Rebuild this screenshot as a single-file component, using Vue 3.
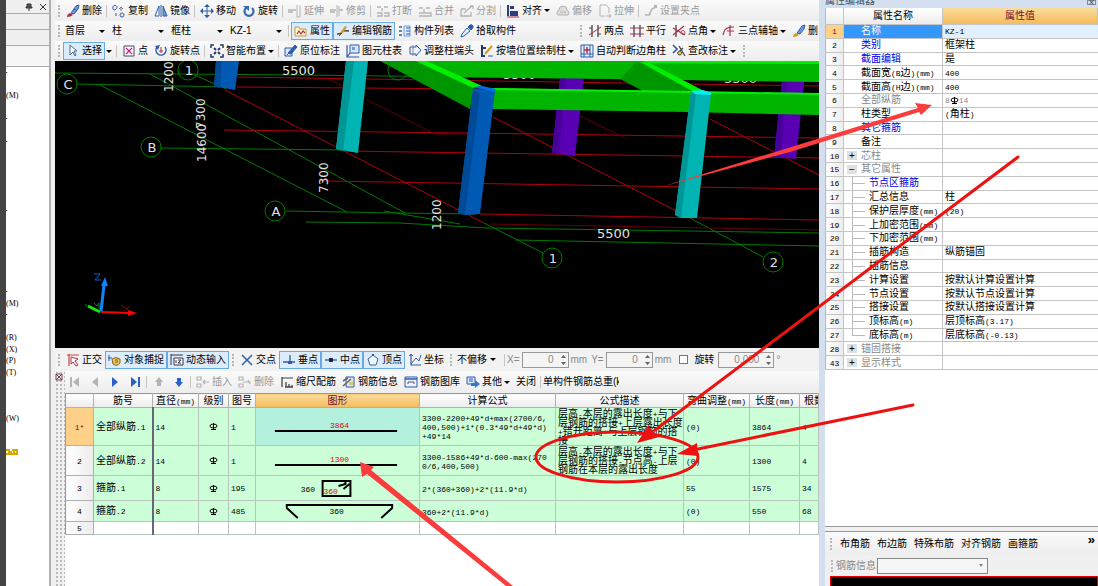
<script setup>
import { h } from 'vue'

const B = '#2f5da8'
const L = '#6f9bd8'
const G = '#b4b4b4'
const D = '#444'
const R = '#a8324a'
const Y = '#e8c25a'
const O = '#d39a2c'

// Each icon is a list of [fill, stroke, path, stroke width]
const icons = {
  brush: [[L, B, 'M5 9L10 2L13 1L12 5L8 10Z'], ['none', B, 'M8 5L11 7'], [R, 'none', 'M1 13Q1 10 4 9L7 11Q5 13 1 13Z']],
  brushSoft: [[L, B, 'M5 9L10 2L13 1L12 5L8 10Z'], [O, 'none', 'M1 13Q1 10 4 9L7 11Q5 13 1 13Z']],
  copy: [['none', B, 'M1 3A2 2 0 1 1 4 5L3 6A2 2 0 0 1 1 3'], ['none', '#777', 'M7 5L9 3L11 5M9 3V7'], ['none', B, 'M8 11A2 2 0 1 1 10 13A2 2 0 0 1 8 11M4 9V12']],
  mirror: [['#fff', B, 'M5 2V12H1Z'], [L, B, 'M9 2V12H13Z'], ['none', B, 'M7 1V13']],
  move: [['none', B, 'M7 2V12M2 7H12', 1], [B, 'none', 'M7 0L10 3H4ZM7 14L10 11H4ZM0 7L3 4V10ZM14 7L11 4V10Z']],
  rotate: [['none', '#3567b5', 'M4 4A4.500 4.500 0 1 0 10 4', 2.200], ['#3567b5', 'none', 'M1 2H7V7Z']],
  extend: [['none', G, 'M0 6H8M0 8H5', 1.500], ['none', G, 'M9 1V13H12V1']],
  trim: [['none', G, 'M0 6H6M9 6H13M0 8H5', 1.500], ['none', G, 'M7 1V13M9 2V12']],
  cut: [['none', G, 'M1 3H5M8 3H12M1 9H6V12H1M8 9H13V12H8M6 4V7', 1.300]],
  merge: [['none', G, 'M1 4H5M8 4H12M1 9H13V12H1M6 5V8', 1.300]],
  split: [['none', G, 'M1 5V12H11V8M4 9L12 2M6 5H1M10 2H13V5', 1.300]],
  align: [['#2b3d7c', 'none', 'M1 1H3V12H1ZM4 7H12V12H4ZM4 2H8V5H4Z'], ['none', R, 'M1 13H13', 1]],
  offset: [['#ddd', G, 'M2 11A3 3 0 0 1 3 6A4 4 0 0 1 11 6A3 3 0 0 1 12 11Z'], ['none', G, 'M4 8H10']],
  stretch: [['#f6f6f6', G, 'M2 1H8L11 4V9M2 1V12H7'], ['none', G, 'M8 12H13M11 10L13 12L11 14']],
  grip: [['none', G, 'M1 11H5L8 5L12 3M6 11V8', 1.500], [G, 'none', 'M10 1H13V4H10Z']],
  props: [['#fff2ca', O, 'M1 3H5L6 5H12V12H1Z'], ['none', R, 'M3 10L5 7L7 10L9 7L11 9', 1.200]],
  rebar: [['none', D, 'M1 10Q5 10 6 8T13 7', 1.500], [O, 'none', 'M4 9L9 2L11 3L7 9Z'], ['none', D, 'M3 12L6 9']],
  list: [['none', B, 'M1 3H4M1 7H4M1 11H4', 1.500], ['#e8f0ff', L, 'M6 2H12V12H6Z'], ['none', B, 'M8 4H12M8 7H12M8 10H12']],
  picker: [[B, B, 'M8 3L10 1Q12 0 13 2Q14 3 11 6Z'], ['#dfeeff', B, 'M7 4L10 7L4 12L1 13L2 10Z']],
  arrow: [['#fff', '#526a8b', 'M4 1V11L7 8L9 12L10 11L8 7H11Z']],
  point: [['#fff', '#446', 'M2 2H12V12H2Z'], ['none', '#c02080', 'M4 4L10 10M10 4L4 10', 1.200]],
  rotPoint: [['none', B, 'M3 3A5 5 0 1 0 11 3', 1.500], [B, 'none', 'M1 2L6 1L4 6Z'], ['none', R, 'M7 3V9M5 7H9']],
  smart: [['none', '#223a6c', 'M1 4V1H4M10 1H13V4M13 10V13H10M4 13H1V10', 1.500], ['none', '#223a6c', 'M4 4L6 6M10 4L8 6M4 10L6 8M10 10L8 8', 2]],
  note: [['#dbe8ff', B, 'M1 4H8V12H1Z'], [B, B, 'M4 9L11 1L13 3L7 10Z'], ['none', B, 'M3 11L5 9']],
  table: [['#dbe8ff', B, 'M4 1H13V9H4Z'], ['none', B, 'M1 1V13H13M1 13L4 9', 1.200], [L, 'none', 'M6 3H9V6H6Z']],
  adjust: [['#eef4ff', B, 'M2 3H8V1L13 6L8 12V10H2Z'], ['none', '#888', 'M5 1V12']],
  wall: [['none', '#223a6c', 'M2 1V12H5M2 4H6', 2], ['none', O, 'M5 10L12 2', 2], ['none', B, 'M8 12H13']],
  judge: [['#e8f0ff', B, 'M1 1H13V13H1Z'], ['none', B, 'M4 1V13M10 1V13M1 10H13'], ['none', R, 'M7 3V9M4 6H10', 1.500]],
  check: [['none', B, 'M1 1L5 5L1 9', 1.700], ['none', D, 'M7 2L13 12M7 8L11 4', 1.200], [Y, D, 'M6 8A2 2 0 1 1 8 11A2 2 0 0 1 6 8']],
  two: [['none', D, 'M4 1V13M10 1V13', 1.300], ['none', R, 'M1 11L13 3'], ['none', D, 'M1 4H4M10 10H13']],
  parallel: [['none', '#445', 'M4 1V13M10 1V13', 1.300], ['none', R, 'M0 4H14M0 10H14', 1.200]],
  angle: [['none', D, 'M4 1V13', 1.300], ['none', R, 'M1 11L12 2M1 4L13 11', 1.200], ['none', R, 'M9 8A2 2 0 1 1 9 9']],
  three: [['none', R, 'M2 8Q3 3 12 3M8 1V12M2 8L1 11M5 7H12', 1.200]],
  ortho: [['none', '#c44', 'M1 2H13M3 1V13', 1.200], ['#fff', R, 'M5 4L12 6L9 8L12 12L10 13L7 9L5 11Z']],
  snap: [[Y, '#8a6420', 'M4 6Q8 3 12 6V10Q9 14 5 11Z'], ['none', B, 'M1 2V8M0 5H4'], ['none', '#8a6420', 'M7 7H10M7 9H10']],
  dynamic: [['#fff', '#334', 'M4 5H13V12H4Z'], ['none', '#334', 'M1 1V12M1 2H13'], ['none', '#334', 'M6 7V10M8 7H11L8 10H11']],
  cross: [['none', '#2d5faa', 'M2 2L12 12M12 2L2 12', 1.500]],
  perp: [['none', B, 'M1 9H13M8 2V9', 1.300], [B, 'none', 'M6 8H10V11H6Z']],
  mid: [['none', B, 'M1 7H13', 1.300], ['#224', 'none', 'M5 5H9V9H5Z']],
  vertex: [['#eef6ff', '#35649a', 'M7 2L12 6L10 12H4L2 6Z'], [B, 'none', 'M6 1H8V3H6Z']],
  coord: [['none', B, 'M3 1V12H13', 1.200], ['none', B, 'M3 11L8 5L11 8L13 2M1 3L3 1L5 3']],
  first: [['none', G, 'M3 2V12', 2], [G, 'none', 'M11 2V12L5 7Z']],
  prev: [[G, 'none', 'M10 2V12L4 7Z']],
  next: [['#2861c8', 'none', 'M4 2V12L10 7Z']],
  last: [['#2861c8', 'none', 'M3 2V12L9 7Z'], ['none', '#2861c8', 'M11 2V12', 2]],
  up: [[G, 'none', 'M7 2L11 7H9V11H5V7H3Z']],
  down: [['#2861c8', 'none', 'M7 12L3 7H5V3H9V7H11Z']],
  insert: [['none', G, 'M1 2H5V5H1ZM1 9H5V12H1ZM7 7H13M7 7L9 5M7 7L9 9', 1.200]],
  remove: [['none', G, 'M1 2H5V5H1ZM1 9H5V12H1ZM5 7H13M10 5L12 9', 1.200]],
  scale: [['none', D, 'M2 2V12', 1.300], ['none', D, 'M2 3H13', 1], ['none', D, 'M6 7V12M9 9V12M5 12H13M12 10V12', 1.300]],
  info: [['#dbe8ff', B, 'M4 2H12V12H4Z'], ['none', '#665', 'M1 11L9 4M1 6L6 3', 1.500], [Y, 'none', 'M7 7H11V10H7Z']],
  library: [['#eef4ff', B, 'M1 2H13V12H1Z'], ['none', B, 'M1 4H13', 1.500], ['none', '#556', 'M4 9V7H10V9']],
  other: [['#dbe8ff', B, 'M1 2H9V9H1Z'], ['none', B, 'M3 4H7M3 6H7'], ['#3d74c8', 'none', 'M5 8H9V5L14 9L9 13V11H5Z']],
}

const Icon = (p) =>
  h(
    'svg',
    { class: 'icon', viewBox: '0 0 14 14', 'aria-hidden': 'true' },
    icons[p.name].map(([fill, stroke, d, w]) => h('path', { fill, stroke, d, 'stroke-width': w || 1 })),
  )
Icon.props = ['name']

// Half-width runs are set in a narrow monospace beside the full-width characters
const Mixed = (p) =>
  String(p.text)
    .split(/([\x20-\x7e]+)/)
    .filter(Boolean)
    .map((s) => h('span', { class: /^[\x20-\x7e]/.test(s) ? 'half' : 'full' }, s))
Mixed.props = ['text']

const Steel = () =>
  h('svg', { class: 'steel', viewBox: '0 0 9 9', role: 'img', 'aria-label': 'HRB335' }, [
    h('ellipse', { cx: 4.5, cy: 4, rx: 3.5, ry: 2, fill: 'none', stroke: 'currentColor' }),
    h('path', { d: 'M4.500 1V8M2 7.500H7', fill: 'none', stroke: 'currentColor' }),
  ])

const sep = { sep: true }
const modify = [
  { i: 'brush', t: '删除' }, sep,
  { i: 'copy', t: '复制' }, { i: 'mirror', t: '镜像' }, sep,
  { i: 'move', t: '移动' }, { i: 'rotate', t: '旋转' }, sep,
  { i: 'extend', t: '延伸', off: true }, { i: 'trim', t: '修剪', off: true }, sep,
  { i: 'cut', t: '打断', off: true }, { i: 'merge', t: '合并', off: true }, { i: 'split', t: '分割', off: true }, sep,
  { i: 'align', t: '对齐', more: true },
  { i: 'offset', t: '偏移', off: true }, { i: 'stretch', t: '拉伸', off: true }, sep,
  { i: 'grip', t: '设置夹点', off: true },
]
const picks = [
  { label: '楼层', v: '首层', c: 'floor' },
  { label: '构件类别', v: '柱' },
  { label: '构件类型', v: '框柱' },
  { label: '构件', v: 'KZ-1' },
]
const member = [
  { i: 'props', t: '属性', on: true }, { i: 'rebar', t: '编辑钢筋', on: true },
  { i: 'list', t: '构件列表' }, { i: 'picker', t: '拾取构件' },
]
const axes = [
  { i: 'two', t: '两点' }, { i: 'parallel', t: '平行' }, { i: 'angle', t: '点角', more: true },
  { i: 'three', t: '三点辅轴', more: true }, { i: 'brushSoft', t: '删' },
]
const drawing = [
  { i: 'arrow', t: '选择', on: true, more: true }, sep,
  { i: 'point', t: '点' }, { i: 'rotPoint', t: '旋转点' }, sep,
  { i: 'smart', t: '智能布置', more: true }, sep,
  { i: 'note', t: '原位标注' }, { i: 'table', t: '图元柱表' }, { i: 'adjust', t: '调整柱端头' },
  { i: 'wall', t: '按墙位置绘制柱', more: true }, { i: 'judge', t: '自动判断边角柱' },
  { i: 'check', t: '查改标注', more: true },
]
const snapA = [{ i: 'ortho', t: '正交' }, { i: 'snap', t: '对象捕捉', on: true }, { i: 'dynamic', t: '动态输入', on: true }]
const snapB = [
  { i: 'cross', t: '交点' }, { i: 'perp', t: '垂点', on: true }, { i: 'mid', t: '中点', on: true },
  { i: 'vertex', t: '顶点', on: true }, { i: 'coord', t: '坐标' },
]
const record = [
  { i: 'first', l: '第一行', off: true }, { i: 'prev', l: '上一行', off: true }, { i: 'next', l: '下一行' }, { i: 'last', l: '最后一行' }, sep,
  { i: 'up', l: '上移', off: true }, { i: 'down', l: '下移' }, sep,
  { i: 'insert', t: '插入', off: true }, { i: 'remove', t: '删除', off: true }, { i: 'scale', t: '缩尺配筋' },
  { i: 'info', t: '钢筋信息' }, { i: 'library', t: '钢筋图库' }, { i: 'other', t: '其他', more: true }, { t: '关闭' }, sep,
]

const bars = [
  { n: '1*', name: '全部纵筋.1', d: 14, no: 1, f: '3300-2200+49*d+max(2700/6,400,500)+1*(0.3*49*d+49*d)+49*14', t: '层高-本层的露出长度+与下层钢筋的搭接+上层露出长度+错开距离+与上层钢筋的搭接', b: '(0)', len: 3864, q: 4, c: 'r1' },
  { n: '2', name: '全部纵筋.2', d: 14, no: 1, f: '3300-1586+49*d-600-max(2700/6,400,500)', t: '层高-本层的露出长度+与下层钢筋的搭接-节点高-上层钢筋在本层的露出长度', b: '(0)', len: 1300, q: 4, c: 'r2' },
  { n: '3', name: '箍筋.1', d: 8, no: 195, f: '2*(360+360)+2*(11.9*d)', t: '', b: '55', len: 1575, q: 34, c: 'r3' },
  { n: '4', name: '箍筋.2', d: 8, no: 485, f: '360+2*(11.9*d)', t: '', b: '(0)', len: 550, q: 68, c: 'r4' },
]

const props = [
  { n: 1, k: '名称', v: 'KZ-1', c: 'sel' },
  { n: 2, k: '类别', v: '框架柱', c: 'blue' },
  { n: 3, k: '截面编辑', v: '是', c: 'blue' },
  { n: 4, k: '截面宽(B边)(mm)', v: '400' },
  { n: 5, k: '截面高(H边)(mm)', v: '400' },
  { n: 6, k: '全部纵筋', v: '8', steel: '14', c: 'gray' },
  { n: 7, k: '柱类型', v: '(角柱)' },
  { n: 8, k: '其它箍筋', v: '', c: 'blue' },
  { n: 9, k: '备注', v: '' },
  { n: 10, k: '芯柱', v: '', c: 'gray', box: '+' },
  { n: 15, k: '其它属性', v: '', c: 'gray', box: '−' },
  { n: 16, k: '节点区箍筋', v: '', c: 'blue kid' },
  { n: 17, k: '汇总信息', v: '柱', c: 'kid' },
  { n: 18, k: '保护层厚度(mm)', v: '(20)', c: 'kid' },
  { n: 19, k: '上加密范围(mm)', v: '', c: 'kid' },
  { n: 20, k: '下加密范围(mm)', v: '', c: 'kid' },
  { n: 21, k: '插筋构造', v: '纵筋锚固', c: 'kid' },
  { n: 22, k: '插筋信息', v: '', c: 'kid' },
  { n: 23, k: '计算设置', v: '按默认计算设置计算', c: 'kid' },
  { n: 24, k: '节点设置', v: '按默认节点设置计算', c: 'kid' },
  { n: 25, k: '搭接设置', v: '按默认搭接设置计算', c: 'kid' },
  { n: 26, k: '顶标高(m)', v: '层顶标高(3.17)', c: 'kid' },
  { n: 27, k: '底标高(m)', v: '层底标高(-0.13)', c: 'kid last' },
  { n: 28, k: '锚固搭接', v: '', c: 'gray', box: '+' },
  { n: 43, k: '显示样式', v: '', c: 'gray', box: '+' },
]

const keys = { 0: '▪', 2: '(M)', 4: '▪', 6: '▪', 12: '▪', 19: '▪', 20: '(M)', 21: '▪', 23: '(R)', 24: '(X)', 25: '(P)', 26: '(T)', 30: '(W)' }
const tree = Array.from({ length: 45 }, (_, i) => keys[i] || '')

const greens = [
  'M55 73L300 75L819 81', 'M76 84L230 87', 'M98 84L347 212', 'M150 74L405 213', 'M188 72L226 89',
  'M161 148L345 150', 'M286 211L400 213L476 214', 'M306 222L400 223L487 228L819 233', 'M515 240L819 246',
  'M484 223L543 253', 'M690 218L763 257', 'M384 211L460 224',
]
const reds = [
  'M237 87L480 89', 'M237 77L819 86', 'M224 130L540 134L819 138', 'M345 151L819 158', 'M324 181L819 189',
  'M480 214L819 220', 'M225 90L484 223', 'M493 117L690 218', 'M710 119L819 175',
]
const faint = ['M367 100L435 134H475', 'M580 116L625 138', 'M490 224L819 230', 'M330 80L345 87']
const bubbles = [
  { x: 67, y: 84, t: 'C' }, { x: 188, y: 70, t: '1' }, { x: 151, y: 147, t: 'B' }, { x: 275, y: 211, t: 'A' },
  { x: 552, y: 258, t: '1' }, { x: 773, y: 262, t: '2' },
]
const upright = [
  { x: 173, y: 92, t: '1200' }, { x: 205, y: 129, t: '7300' }, { x: 206, y: 162, t: '14600' },
  { x: 328, y: 193, t: '7300' }, { x: 441, y: 230, t: '1200' },
]

const Tools = (p) =>
  p.items.map((a) =>
    a.sep
      ? h('i', { class: 'sep' })
      : h('span', { class: 'slot' }, [
          h('button', { type: 'button', class: ['tool', { on: a.on }], disabled: a.off, 'aria-label': a.l }, [
            a.i && h(Icon, { name: a.i }),
            a.t && h('span', a.t),
            a.more && !a.on && h('i', { class: 'more' }),
          ]),
          a.more && a.on && h('i', { class: 'more' }),
        ]),
  )
Tools.props = ['items']

const Arrows = () =>
  h('svg', { class: 'arrows', viewBox: '0 0 7 12', 'aria-hidden': 'true' }, [
    h('path', { d: 'M3.500 1L6 4H1ZM1 8H6L3.500 11Z', fill: '#666' }),
  ])
</script>

<template>
  <div class="app">
    <div class="edge"></div>
    <aside class="nav">
      <div class="nav-head">
        <button type="button" aria-label="固定"><svg viewBox="0 0 8 8"><path d="M2 1H6V4H7V5H1V4H2ZM4 5V8" fill="#555" stroke="#333" /></svg></button>
        <button type="button" aria-label="关闭"><svg viewBox="0 0 8 8"><path d="M1 1L7 7M7 1L1 7" stroke="#333" /></svg></button>
      </div>
      <div class="nav-a"></div>
      <div class="nav-b"></div>
      <div class="nav-c"></div>
      <ul class="tree">
        <li v-for="(k, i) in tree" :key="i" :class="{ dot: k === '▪' }">
          <svg v-if="i === 33" viewBox="0 0 13 8"><path d="M0 2H3V6H0M5 3V6H8V3M8 6H11V2H6" fill="none" stroke="#d8a800" stroke-width="2" /></svg>
          <template v-else>{{ k }}</template>
        </li>
      </ul>
    </aside>

    <main class="main">
      <div class="bar first"><i class="grip"></i><Tools :items="modify" /></div>
      <div class="bar">
        <i class="grip"></i>
        <label v-for="p in picks" :key="p.v" class="pick" :class="p.c">
          <select :aria-label="p.label"><option>{{ p.v }}</option></select><i class="more"></i>
        </label>
        <i class="sep"></i>
        <Tools :items="member" />
        <div class="axes"><i class="grip"></i><Tools :items="axes" /></div>
      </div>
      <div class="bar"><i class="grip"></i><Tools :items="drawing" /><i class="grip tail"></i></div>

      <svg class="scene" viewBox="55 61 764 287" preserveAspectRatio="xMinYMin slice" role="img" aria-label="三维视图">
        <g class="line green"><path v-for="d in greens" :key="d" :d="d" /></g>
        <g class="line red"><path v-for="d in reds" :key="d" :d="d" /></g>
        <g class="line faint"><path v-for="d in faint" :key="d" :d="d" /></g>
        <g class="line green">
          <circle cx="398" cy="70" r="10" />
          <circle v-for="b in bubbles" :key="b.x" :cx="b.x" :cy="b.y" r="10" />
        </g>
        <g class="mark">
          <text v-for="b in bubbles" :key="b.x" :x="b.x + 1" :y="b.y + 5" text-anchor="middle">{{ b.t }}</text>
          <text x="282" y="75">5500</text>
          <text x="597" y="238">5500</text>
          <text x="503" y="79">5500</text>
          <text x="724" y="83">5500</text>
          <text v-for="u in upright" :key="u.x" class="up" :transform="`translate(${u.x} ${u.y}) rotate(-90)`">{{ u.t }}</text>
        </g>
        <path fill="#5a00b4" d="M560 77H584L575 156L552 153Z" />
        <path fill="#48009a" d="M560 77H566L559 154L552 153Z" />
        <path fill="#5a00b4" d="M784 61H800V66H806L796 159L774 157Z" />
        <path fill="#48009a" d="M782 80H787L781 158L774 157Z" />
        <path fill="#00b400" d="M422 61H819V82L683 80L620 79L453 77Z" />
        <path fill="#00f000" d="M644 61H819V64L646 63Z" />
        <path fill="#009600" d="M380 61H415L474 88L470 109Z" />
        <path fill="#00f000" d="M415 61H427L482 86L473 88Z" />
        <path fill="#009600" d="M635 63L642 62L693 91H643L620 79Z" />
        <path fill="#00f000" d="M640 62H648L704 91H692Z" />
        <path fill="#00b400" d="M492 88L693 92L819 94V115L687 112L492 109Z" />
        <path fill="#00f000" d="M492 88L693 91L819 93V95L693 93L492 90Z" />
        <path fill="#005ab4" d="M216 61H239L235 90L214 86Z" />
        <path fill="#004a98" d="M216 61H222L220 88L214 86Z" />
        <path fill="#00b4b4" d="M346 61H368L358 153L336 149Z" />
        <path fill="#009696" d="M346 61H354L343 151L336 149Z" />
        <path fill="#005ab4" d="M473 88L495 91L480 214L465 215L458 213Z" />
        <path fill="#004a98" d="M473 90L480 93L465 215L458 213Z" />
        <path fill="#0070e0" d="M473 87L482 86L496 89L494 92Z" />
        <path fill="#00b4b4" d="M691 91L711 94L697 218H681L675 215Z" />
        <path fill="#009696" d="M691 92L696 94L681 218L675 215Z" />
        <path fill="#00f0f0" d="M691 91L703 90L712 93L710 95L695 94Z" />
        <path d="M101 311L104 285" stroke="#0a84ff" stroke-width="3" />
        <path d="M105 277L108 286H101Z" fill="#0a84ff" />
        <path d="M94 274H100L95 280H101" fill="none" stroke="#0a62c8" />
        <path d="M101 312L130 313" stroke="#f00" stroke-width="2" />
        <path d="M137 313L128 310V316Z" fill="#f00" />
        <path d="M121 305L130 311M130 306L126 309" stroke="#900" />
        <path d="M100 312L88 306" stroke="#1be01b" stroke-width="3" />
        <path d="M86 304V307M94 303L97 306L99 303V309" stroke="#080" fill="none" />
      </svg>

      <section class="lower">
        <div class="bar snap">
          <i class="grip"></i><Tools :items="snapA" />
          <i class="grip gap"></i><Tools :items="snapB" />
          <i class="grip gap"></i>
          <label class="pick shift"><select aria-label="偏移方式"><option>不偏移</option></select><i class="more"></i></label>
          <i class="sep"></i>
          <label class="num">X=<span class="spin"><input value="0" disabled /><Arrows /></span>mm</label>
          <label class="num">Y=<span class="spin"><input value="0" disabled /><Arrows /></span>mm</label>
          <label class="num turn"><input type="checkbox" /><span>旋转</span></label>
          <span class="num"><span class="spin wide"><input value="0.000" aria-label="旋转角度" disabled /><Arrows /></span>°</span>
        </div>
        <div class="dock">
          <div class="gutter"><svg viewBox="0 0 8 8"><path d="M1 1H7V7H1ZM1 1L7 7M7 1L1 7" fill="none" stroke="#704050" /></svg></div>
          <div class="editor">
            <div class="bar record"><Tools :items="record" /><span class="total">单构件钢筋总重(kg)</span></div>
            <div class="sheet">
              <table class="bars">
                <colgroup>
                  <col class="c0" /><col class="c1" /><col class="c2" /><col class="c3" /><col class="c4" /><col class="c5" />
                  <col class="c6" /><col class="c7" /><col class="c8" /><col class="c9" /><col />
                </colgroup>
                <thead>
                  <tr>
                    <th></th><th>筋号</th><th><Mixed text="直径(mm)" /></th><th>级别</th><th>图号</th><th class="hot">图形</th>
                    <th>计算公式</th><th>公式描述</th><th><Mixed text="弯曲调整(mm)" /></th><th><Mixed text="长度(mm)" /></th><th class="cut">根数</th>
                  </tr>
                </thead>
                <tbody>
                  <tr v-for="(b, i) in bars" :key="b.n" :class="b.c">
                    <th><Mixed :text="b.n" /></th>
                    <td><Mixed :text="b.name" /></td>
                    <td><Mixed :text="b.d" /></td>
                    <td class="mid"><Steel /></td>
                    <td><Mixed :text="b.no" /></td>
                    <td class="shape">
                      <svg v-if="i < 2" viewBox="0 0 164 24">
                        <path d="M19 16H142" stroke="#000" stroke-width="2" />
                        <text x="84" y="13" text-anchor="middle" fill="#e00000">{{ b.len }}</text>
                      </svg>
                      <svg v-else-if="i === 2" viewBox="0 0 164 24">
                        <path d="M67 5H95V20H67ZM90 5V8L83 10M94 8L88 13" fill="none" stroke="#000" stroke-width="2" />
                        <text x="45" y="16">360</text><text x="68" y="18" fill="#e00000">360</text>
                      </svg>
                      <svg v-else viewBox="0 0 164 20">
                        <path d="M42 17L31 7V4H137V7L126 17" fill="none" stroke="#000" stroke-width="2" />
                        <text x="74" y="13">360</text>
                      </svg>
                    </td>
                    <td class="wrap formula"><Mixed :text="b.f" /></td>
                    <td class="wrap"><Mixed :text="b.t" /></td>
                    <td><Mixed :text="b.b" /></td>
                    <td><Mixed :text="b.len" /></td>
                    <td><Mixed :text="b.q" /></td>
                  </tr>
                  <tr class="r5"><th><Mixed text="5" /></th><td v-for="n in 10" :key="n"></td></tr>
                </tbody>
              </table>
            </div>
          </div>
        </div>
      </section>
    </main>

    <aside class="side">
      <div class="caption"><span>属性编辑器</span><button type="button" aria-label="关闭面板">×</button></div>
      <div class="sheet">
        <table class="props">
          <colgroup><col class="p0" /><col class="p1" /><col /></colgroup>
          <thead><tr><th></th><th>属性名称</th><th class="hot">属性值</th></tr></thead>
          <tbody>
            <tr v-for="p in props" :key="p.n" :class="p.c">
              <th><Mixed :text="p.n" /></th>
              <td class="key"><button v-if="p.box" type="button" class="box" :aria-label="p.k">{{ p.box }}</button><Mixed :text="p.k" /></td>
              <td><Mixed :text="p.v" /><template v-if="p.steel"><Steel /><Mixed :text="p.steel" /></template></td>
            </tr>
          </tbody>
        </table>
      </div>
      <div class="section">
        <div class="bar links">
          <i class="grip"></i>
          <button type="button">布角筋</button><button type="button">布边筋</button><button type="button">特殊布筋</button>
          <button type="button">对齐钢筋</button><button type="button">画箍筋</button>
          <button type="button" class="chev" aria-label="更多">»</button>
        </div>
        <div class="bar info">
          <i class="grip"></i>
          <label class="pick rebar"><span>钢筋信息</span><select></select><i class="more"></i></label>
        </div>
        <div class="preview"></div>
      </div>
    </aside>

    <svg class="notes" viewBox="0 0 1098 586" preserveAspectRatio="none" aria-hidden="true">
      <path fill="#fa3c3c" d="M661 187L918 108L915 103L932 105L921 115L919 112L790 152Z" />
      <path fill="#fa3c3c" d="M360 462L374 467L371 470L513 586H506L367 474L362 477Z" />
      <g fill="none" stroke="#ee1111" stroke-width="3" stroke-linecap="round">
        <path d="M1018 157L655 430M913 405L698 449" />
        <ellipse cx="617" cy="457" rx="81" ry="25" />
      </g>
      <path fill="#ee1111" d="M637 443L648 426L659 437ZM677 454L697 443L698 456Z" />
    </svg>
  </div>
</template>

<style>
html,
body {
  height: 100%;
  overflow: hidden;
}
#app {
  height: 100%;
}
</style>

<style scoped>
.app {
  position: relative;
  display: flex;
  height: 100vh;
  overflow: hidden;
  background: #f0f0f0;
  color: #000;
  font: 10px/12px "Liberation Sans", "Noto Sans CJK SC", sans-serif;
}
.app :deep(button),
.app :deep(input),
.app :deep(select) {
  margin: 0;
  padding: 0;
  border: 0;
  background: none;
  color: inherit;
  font: inherit;
}
.edge { width: 6px; background: #444; }

.nav { display: flex; flex-direction: column; width: 43px; border-right: 2px solid #b0b0b0; }
.nav-head { display: flex; justify-content: flex-end; align-items: center; gap: 6px; height: 13px; padding-right: 2px; border-bottom: 1px solid #aaa; }
.nav-head button { display: flex; }
.nav-head svg { width: 8px; height: 8px; }
.nav-a { height: 15px; border-bottom: 1px solid #aaa; }
.nav-b { height: 15px; border-bottom: 1px solid #aaa; }
.nav-c { height: 20px; border-bottom: 1px solid #aaa; background: #f6f6f6; }
.tree { flex: 1; display: grid; grid-auto-rows: 1fr; margin: 0; padding: 0; overflow: hidden; background: #fff; list-style: none; font: 8px/11px "Liberation Serif", serif; }
.tree li { min-height: 0; }
.tree .dot { font-size: 4px; }
.tree svg { width: 13px; height: 8px; }

.main { flex: 1; display: flex; flex-direction: column; min-width: 0; margin-left: 4px; overflow: hidden; }
.bar { display: flex; align-items: center; flex: none; height: 20px; overflow: hidden; white-space: nowrap; background: linear-gradient(#fafafa, #ededed); }
.bar.first { height: 21px; }
.grip { flex: none; width: 1px; height: 12px; margin: 0 2px 0 3px; border-left: 2px dotted #b8b8b8; }
.main :deep(.slot) { display: flex; flex: none; align-items: center; }
.main :deep(.tool) { display: flex; align-items: center; gap: 2px; height: 18px; padding: 0 3px; }
.main :deep(.tool.on) { padding: 0 2px; border: 1px solid #6aaae4; background: #dcecfb; }
.main :deep(.tool:disabled) { color: #999; }
.main :deep(.icon) { flex: none; width: 14px; height: 14px; }
.main :deep(.sep),
.sep { flex: none; width: 1px; height: 12px; margin: 0 2px 0 1px; background: #c4c4c4; }
.app :deep(.more),
.more { flex: none; border: 3px solid transparent; border-top-color: #000; border-bottom-width: 0; margin: 0; }
.main :deep(.slot > .more) { margin: 0 3px 0 1px; }

.pick { position: relative; display: flex; flex: none; align-items: center; width: 57px; height: 16px; padding-left: 2px; }
.pick.floor { width: 45px; }
.pick select { flex: 1; min-width: 0; height: 16px; appearance: none; }
.pick .more { margin: 0 5px 0 0; pointer-events: none; }
.pick.shift { width: 44px; margin-right: 2px; }
.axes { display: flex; align-items: center; margin-left: 58px; }
.tail { margin-left: 4px; }

.scene { flex: 287 1 0; width: 100%; min-height: 0; background: #000; }
.line { fill: none; stroke-width: 1; }
.green { stroke: #007800; }
.red { stroke: #b00010; }
.faint { stroke: #640008; }
.mark { fill: #e0e0e0; font: 13px "DejaVu Sans", sans-serif; }
.up { font-size: 12px; }

.lower { flex: 238 1 0; display: flex; flex-direction: column; min-height: 0; }
.snap { height: 23px; background: #f2f2f2; }
.gap { margin-left: 3px; }
.num { display: flex; flex: none; align-items: center; gap: 2px; margin-right: 4px; color: #888; }
.spin { display: flex; align-items: center; width: 45px; height: 14px; border: 1px solid #999; background: #f4f4f4; }
.spin.wide { width: 54px; }
.spin input { flex: 1; min-width: 0; text-align: right; }
.spin :deep(.arrows) { flex: none; width: 7px; height: 12px; margin: 0 1px 0 6px; }
.turn { gap: 6px; margin-left: 4px; color: #000; }
.app .turn input { width: 9px; height: 9px; appearance: none; border: 1px solid #777; background: #fff; }

.dock { flex: 1; display: flex; min-height: 0; }
.gutter { width: 10px; flex: none; background: radial-gradient(#bbb 30%, transparent 40%) 0 0 / 4px 4px; }
.gutter svg { display: block; width: 8px; height: 8px; margin-top: 2px; background: #f0f0f0; }
.editor { flex: 1; display: flex; flex-direction: column; min-width: 0; }
.record { height: 22px; }
.total { width: 76px; overflow: hidden; }
.sheet { flex: 1; min-height: 0; overflow: hidden; background: #fff; }

table { width: 100%; border-collapse: collapse; table-layout: fixed; }
th, td { padding: 0 0 0 2px; border: 1px solid #b8c4bc; border-width: 0 1px 1px 0; overflow: hidden; text-align: left; font-weight: normal; white-space: nowrap; }
th { padding: 0; border-color: #b0b0b0; background: linear-gradient(90deg, #fff, #ececec); text-align: center; }
thead th { background: linear-gradient(#fff, #ececec); }
thead th.hot { background: linear-gradient(#fbdc9c, #f4bc5c); color: #701030; }
.app :deep(.half) { font: 8px/9px "Liberation Mono", monospace; }
.app :deep(.steel) { width: 9px; height: 9px; vertical-align: middle; }
.bars { border-top: 1px solid #999; border-left: 1px solid #999; }
.bars thead th { height: 13px; line-height: 12px; }
.bars tbody td { background: #ccffd8; }
.bars tbody td:nth-child(2) { border-right: 2px solid #667; }
.c0 { width: 28px; }
.c1 { width: 59px; }
.c2 { width: 46px; }
.c3 { width: 30px; }
.c4 { width: 27px; }
.c5 { width: 164px; }
.c6 { width: 136px; }
.c7 { width: 128px; }
.c8 { width: 66px; }
.c9 { width: 50px; }
.bars thead .cut { padding-left: 4px; text-align: left; }
.bars .mid { padding: 0; text-align: center; }
.wrap { line-height: 9px; white-space: normal; word-break: break-all; }
.wrap :deep(.half) { line-height: 0; }
.bars .formula { padding-right: 6px; }
.bars .shape { padding: 0; }
.shape svg { display: block; width: 100%; height: 24px; }
.shape text { font: 8px "Liberation Mono", monospace; }
.r1 td, .r1 th { height: 37px; }
.r2 td, .r2 th { height: 29px; }
.r3 td, .r3 th { height: 24px; }
.r4 td, .r4 th { height: 20px; }
.r4 .shape svg { height: 20px; }
.r5 td, .r5 th { height: 12px; line-height: 9px; }
.bars .r5 td { background: #fff; }
.r1 th { background: #ffd088; color: #701030; }
.bars .r1 .shape { background: #b4f0de; }

.side { display: flex; flex-direction: column; flex: none; width: 273px; border-left: 6px solid #d3deee; }
.caption { display: flex; justify-content: space-between; height: 8px; padding-right: 2px; overflow: hidden; background: #d3deee; color: #456; line-height: 1px; }
.caption button { width: 9px; height: 5px; border: 1px solid #889; line-height: 1px; }
.side > .sheet { border-bottom: 1px solid #999; }
.props { height: 362px; border-left: 1px solid #bbb; }
.props th, .props td { line-height: 12px; height: 12px; border-color: #c4c4c4; }
.props thead th { height: 16px; }
.props td:last-child { border-right: 0; }
.p0 { width: 18px; }
.p1 { width: 99px; }
.props .key { position: relative; padding-left: 17px; }
.props .kid .key { padding-left: 25px; }
.kid .key::before { content: ""; position: absolute; left: 8px; top: 0; bottom: 0; border-left: 1px solid #bbb; }
.kid .key::after { content: ""; position: absolute; left: 8px; top: 50%; width: 13px; border-top: 1px solid #bbb; }
.last .key::before { bottom: 50%; }
.blue .key { color: #0000e8; }
.gray td { color: #888; }
.gray :deep(.steel) { color: #000; }
.sel th { background: #ffd088; color: #701030; }
.sel td { background: #e0f0ff; }
.sel .key { background: #3397fb; color: #fff; }
.app .box { position: absolute; left: 3px; top: 2px; width: 10px; height: 9px; background: #e0e0e0; color: #000; line-height: 9px; }

.section { flex: none; display: flex; flex-direction: column; height: 54px; margin-top: 4px; border-top: 1px solid #999; }
.links { height: 23px; gap: 7px; padding-left: 2px; }
.links .grip { margin-right: 0; }
.links .chev { margin: 0 3px 8px auto; font-size: 13px; font-weight: bold; }
.info { height: 21px; padding-left: 3px; background: #f0f0f0; color: #888; }
.rebar { width: 152px; gap: 1px; padding-left: 0; }
.app .rebar select { height: 16px; border: 1px solid #888; background: #f6f6f6; }
.rebar .more { position: absolute; right: 0; border-width: 3px 2px 0; border-top-color: #888; }
.preview { flex: 1; margin: 0 0 0 5px; border: 1px solid #e00; border-bottom: 0; background: #000; }

.notes { position: absolute; inset: 0; width: 100%; height: 100%; pointer-events: none; }
</style>
